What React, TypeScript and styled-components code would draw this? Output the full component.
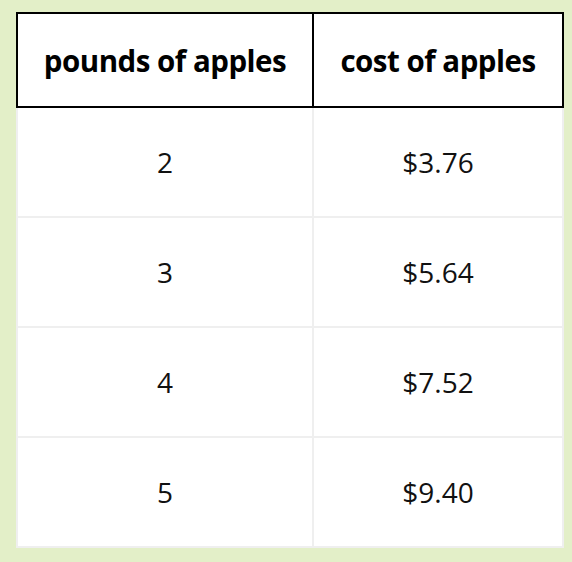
import React from "react";
import styled, { createGlobalStyle } from "styled-components";

const GlobalStyle = createGlobalStyle`
  html, body {
    margin: 0;
    padding: 0;
    background: #e3efc8;
  }
  body {
    font-family: "Open Sans", "Liberation Sans", sans-serif;
  }
`;

const Page = styled.div`
  padding: 12px 14px 14px 16px;
`;

const Table = styled.table`
  border-collapse: collapse;
  width: 542px;
  table-layout: fixed;
  background: #ffffff;
`;

const HeadCell = styled.th<{ $width: number }>`
  width: ${(p) => p.$width}px;
  height: 92px;
  border: 2px solid #000000;
  font-size: 29.5px;
  font-weight: 700;
  color: #000000;
  text-align: center;
  padding: 0;
  letter-spacing: -0.5px;
`;

const Cell = styled.td`
  height: 108px;
  border: 2px solid #efefef;
  border-top: none;
  font-size: 28px;
  color: #111111;
  text-align: center;
  padding: 0;
`;

const rows = [
  { pounds: "2", cost: "$3.76" },
  { pounds: "3", cost: "$5.64" },
  { pounds: "4", cost: "$7.52" },
  { pounds: "5", cost: "$9.40" },
];

export default function App() {
  return (
    <>
      <GlobalStyle />
      <Page>
        <Table>
          <thead>
            <tr>
              <HeadCell $width={294}>pounds of apples</HeadCell>
              <HeadCell $width={248}>cost of apples</HeadCell>
            </tr>
          </thead>
          <tbody>
            {rows.map((row) => (
              <tr key={row.pounds}>
                <Cell>{row.pounds}</Cell>
                <Cell>{row.cost}</Cell>
              </tr>
            ))}
          </tbody>
        </Table>
      </Page>
    </>
  );
}
